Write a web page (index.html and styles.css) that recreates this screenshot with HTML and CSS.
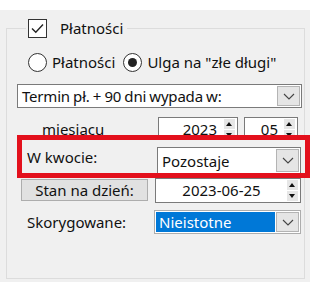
FILE: index.html
```html
<!DOCTYPE html>
<html lang="pl">
<head>
    <meta charset="UTF-8">
    <title>Płatności</title>
    <link rel="stylesheet" href="styles.css">
</head>
<body>
    <div class="panel">
        <fieldset class="group">
            <legend class="group-title">
                <span class="check">
                    <svg width="13" height="11" viewBox="0 0 13 11"><path d="M1 5.5 L4.8 9.3 L12 1.5" fill="none" stroke="#222" stroke-width="1.4"/></svg>
                </span>
                <span>Płatności</span>
            </legend>

            <div class="radio-row">
                <span class="radio"><span class="radio-dot"></span>Płatności</span>
                <span class="radio"><span class="radio-dot on"></span>Ulga na "złe długi"</span>
            </div>

            <div class="combo combo-wide">
                <span class="combo-text">Termin pł. + 90 dni wypada w:</span>
                <span class="combo-btn"><svg width="12" height="7" viewBox="0 0 12 7"><path d="M1 1 L6 6 L11 1" fill="none" stroke="#444" stroke-width="1.1"/></svg></span>
            </div>

            <div class="month-row">
                <span class="month-label">miesiącu</span>
                <div class="spin spin-year">
                    <span class="spin-text">2023</span>
                    <span class="spin-arrows"><span class="arr up"></span><span class="arr down"></span></span>
                </div>
                <div class="spin spin-month">
                    <span class="spin-text">05</span>
                    <span class="spin-arrows"><span class="arr up"></span><span class="arr down"></span></span>
                </div>
            </div>

            <div class="highlight">
                <span class="field-label">W kwocie:</span>
                <div class="combo combo-amount">
                    <span class="combo-text">Pozostaje</span>
                    <span class="combo-btn"><svg width="12" height="7" viewBox="0 0 12 7"><path d="M1 1 L6 6 L11 1" fill="none" stroke="#444" stroke-width="1.1"/></svg></span>
                </div>
            </div>

            <div class="date-row">
                <button class="btn">Stan na dzień:</button>
                <div class="spin spin-date">
                    <span class="spin-text">2023-06-25</span>
                    <span class="spin-arrows"><span class="arr up"></span><span class="arr down"></span></span>
                </div>
            </div>

            <div class="fix-row">
                <span class="field-label">Skorygowane:</span>
                <div class="combo combo-fix">
                    <span class="combo-text selected">Nieistotne</span>
                    <span class="combo-btn"><svg width="12" height="7" viewBox="0 0 12 7"><path d="M1 1 L6 6 L11 1" fill="none" stroke="#444" stroke-width="1.1"/></svg></span>
                </div>
            </div>
        </fieldset>
    </div>
</body>
</html>
```

FILE: styles.css
```css
body {
    margin: 0;
    width: 316px;
    height: 288px;
    background-color: #ffffff;
    font-family: "Noto Sans", "Open Sans", sans-serif;
    font-size: 15px;
    color: #111;
    overflow: hidden;
}

.panel {
    margin-top: 10px;
    width: 310px;
    height: 272px;
    background-color: #f0f0f0;
    padding-top: 8px;
    box-sizing: border-box;
}

.group {
    margin: 0 0 0 6px;
    width: 299px;
    height: 261px;
    box-sizing: border-box;
    border: 1px solid #dcdcdc;
    padding: 0 3px 0 10px;
    min-width: 0;
}

.group-title {
    margin-left: 9px;
    padding: 0 4px 0 2px;
    display: flex;
    align-items: center;
    gap: 13px;
    height: 20px;
    line-height: 20px;
}

.check {
    width: 19px;
    height: 19px;
    box-sizing: border-box;
    border: 1px solid #333;
    background-color: #fff;
    display: flex;
    align-items: center;
    justify-content: center;
}

.radio-row {
    margin-top: 14px;
    margin-left: 11px;
    height: 20px;
    display: flex;
    align-items: center;
    gap: 8px;
}

.radio {
    display: flex;
    align-items: center;
    gap: 5px;
}

.radio-dot {
    width: 19px;
    height: 19px;
    box-sizing: border-box;
    border: 1px solid #333;
    border-radius: 50%;
    background-color: #fff;
    position: relative;
}

.radio-dot.on::after {
    content: "";
    position: absolute;
    left: 4px;
    top: 4px;
    width: 9px;
    height: 9px;
    border-radius: 50%;
    background-color: #222;
}

.combo {
    display: flex;
    box-sizing: border-box;
    border: 1px solid #7a7a7a;
    background-color: #fff;
}

.combo-text {
    flex: 1;
    padding-left: 4px;
    display: flex;
    align-items: center;
    white-space: nowrap;
}

.combo-text.selected {
    background-color: #0078d7;
    color: #fff;
    margin: 1px 0 1px 1px;
    padding-left: 3px;
}

.combo-btn {
    width: 23px;
    box-sizing: border-box;
    border: 1px solid #b4b4b4;
    margin: 1px;
    background-color: #e5e5e5;
    display: flex;
    align-items: center;
    justify-content: center;
}

.combo-wide {
    margin-top: 12px;
    width: 285px;
    height: 24px;
}

.combo-wide .combo-text {
    word-spacing: -0.5px;
    letter-spacing: -0.2px;
}

.month-row {
    margin-top: 9px;
    height: 24px;
    display: flex;
    align-items: center;
}

.month-label {
    margin-left: 25px;
    width: 116px;
}

.spin {
    display: flex;
    height: 24px;
    box-sizing: border-box;
    border: 1px solid #7a7a7a;
    border-bottom: none;
    background-color: #fff;
}

.spin-text {
    flex: 1;
    text-align: right;
    padding-right: 5px;
    line-height: 22px;
}

.spin-arrows {
    width: 11px;
    display: flex;
    flex-direction: column;
    margin: 1px 2px 1px 0;
    gap: 1px;
}

.arr {
    flex: 1;
    background-color: #e6e6e6;
    position: relative;
}

.arr::after {
    content: "";
    position: absolute;
    left: 2px;
    border-left: 3.5px solid transparent;
    border-right: 3.5px solid transparent;
}

.arr.up::after {
    bottom: 3px;
    border-bottom: 4px solid #111;
}

.arr.down::after {
    top: 3px;
    border-top: 4px solid #111;
}

.spin-year {
    width: 80px;
}

.spin-year .spin-text {
    padding-right: 7px;
}

.spin-month {
    width: 54px;
    margin-left: 6px;
}

.spin-month .spin-text {
    padding-right: 6px;
}

.highlight {
    position: relative;
    z-index: 1;
    margin-top: -6px;
    width: 293px;
    height: 43px;
    box-sizing: border-box;
    border: 5px solid #e3101c;
    background-color: #f0f0f0;
    display: flex;
    align-items: flex-end;
}

.field-label {
    width: 130px;
    padding-left: 5px;
    align-self: center;
}

.combo-amount {
    width: 144px;
    height: 26px;
    border-bottom: none;
}

.date-row {
    height: 25px;
    display: flex;
    align-items: flex-start;
}

.btn {
    margin: 1px 0 0 4px;
    width: 127px;
    height: 22px;
    padding: 0;
    font-family: inherit;
    font-size: 15px;
    color: #111;
    background-color: #e1e1e1;
    border: 1px solid #adadad;
    line-height: 18px;
}

.spin-date {
    margin-left: 7px;
    width: 146px;
    height: 25px;
    border: 1px solid #7a7a7a;
}

.spin-date .spin-text {
    text-align: center;
    padding-right: 0;
}

.fix-row {
    margin-top: 7px;
    height: 24px;
    display: flex;
    align-items: center;
}

.fix-row .field-label {
    padding-left: 10px;
    box-sizing: border-box;
    width: 138px;
}

.combo-fix {
    width: 148px;
    height: 24px;
    border-color: #adadad;
}
```
